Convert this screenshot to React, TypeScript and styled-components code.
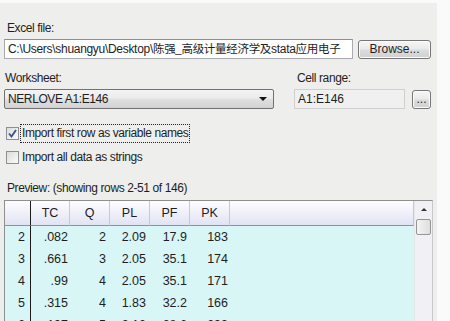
import React from 'react';
import styled, {createGlobalStyle} from 'styled-components';

const GlobalStyle = createGlobalStyle`
    html, body {
        margin: 0;
        padding: 0;
        background: #f9f9f9;
    }
    body {
        font-family: "Liberation Sans", "Noto Sans CJK SC", sans-serif;
        font-size: 12px;
        letter-spacing: -0.4px;
        color: #1e1e1e;
    }
`;

const Window = styled.div`
    width: 450px;
    height: 321px;
    overflow: hidden;
    display: flex;
    background: #fafafa;
`;

const Panel = styled.div`
    width: 437px;
    margin-top: 3px;
    padding: 18px 0 0 4px;
    box-sizing: border-box;
    background: #eeeeec;
    display: flex;
    flex-direction: column;
`;

const Label = styled.div`
    height: 15px;
    line-height: 15px;
    padding-left: ${(props) => props.indent || 3}px;
    margin-top: ${(props) => props.top || 0}px;
`;

const Row = styled.div`
    display: flex;
    align-items: center;
    margin-top: ${(props) => props.top || 0}px;
`;

const Column = styled.div`
    display: flex;
    flex-direction: column;
    width: ${(props) => props.width}px;
    margin-right: ${(props) => props.gap || 0}px;
`;

const TextBox = styled.div`
    width: ${(props) => props.width}px;
    height: 20px;
    box-sizing: border-box;
    border: 1px solid #a9abb2;
    border-top-color: #8e9096;
    background: ${(props) => props.disabled ? '#f0f0f0' : '#ffffff'};
    border-color: ${(props) => props.disabled ? '#cfcfcf' : ''};
    padding: 0 3px;
    line-height: 18px;
    white-space: nowrap;
    overflow: hidden;
    letter-spacing: ${(props) => props.tight ? '-0.3px' : '0'};
`;

const Cjk = styled.span`
    font-size: 11.5px;
`;

const Button = styled.div`
    width: ${(props) => props.width}px;
    height: 19px;
    margin-left: ${(props) => props.left || 0}px;
    box-sizing: border-box;
    border: 1px solid #767676;
    border-radius: 3px;
    background: linear-gradient(#f6f6f6 0%, #eaeaea 45%, #dcdcdc 55%, #d0d0d0 100%);
    box-shadow: inset 0 0 0 1px #fbfbfb;
    display: flex;
    align-items: center;
    justify-content: center;
    font-size: 12px;
    letter-spacing: 0;
`;

const Select = styled.div`
    width: 270px;
    height: 20px;
    box-sizing: border-box;
    border: 1px solid #727272;
    border-radius: 2px;
    background: linear-gradient(#f4f4f4 0%, #ebebeb 45%, #dedede 55%, #d2d2d2 100%);
    display: flex;
    align-items: center;
    justify-content: space-between;
    padding: 0 6px 0 3px;
`;

const Arrow = styled.span`
    width: 0;
    height: 0;
    border-left: 4px solid transparent;
    border-right: 4px solid transparent;
    border-top: 4px solid #111;
`;

const CheckRow = styled.div`
    display: flex;
    align-items: center;
    height: 19px;
    padding-left: 2px;
    margin-top: ${(props) => props.top || 0}px;
`;

const Box = styled.span`
    width: 13px;
    height: 13px;
    box-sizing: border-box;
    border: 1px solid #8e8f8f;
    background: linear-gradient(135deg, #dcdcdc, #fbfbfb);
    display: flex;
    align-items: center;
    justify-content: center;
`;

const CheckLabel = styled.span`
    margin-left: 2px;
    padding: 1px 1px;
    line-height: 15px;
    outline: ${(props) => props.focused ? '1px dotted #222' : 'none'};
`;

const Table = styled.div`
    margin-top: 4px;
    width: 429px;
    height: 130px;
    flex-shrink: 0;
    box-sizing: border-box;
    border: 1px solid #8f8f8f;
    border-right-color: #c8c8c8;
    display: flex;
    overflow: hidden;
    letter-spacing: 0;
`;

const Grid = styled.div`
    flex: 1;
    display: grid;
    grid-template-columns: 26px 39px 40px 40px 40px 40px 1fr;
    grid-auto-rows: 22px;
    grid-template-rows: 25px;
    background: #d9f6f6;
`;

const Head = styled.div`
    background: linear-gradient(#fdfdff, #e1e3f3);
    border-bottom: 1px solid #8494ac;
    border-right: 1px solid ${(props) => props.dark ? '#1c1c1c' : '#c6c9d6'};
    display: flex;
    align-items: center;
    justify-content: center;
    font-size: 12.5px;
`;

const Cell = styled.div`
    display: flex;
    align-items: center;
    justify-content: flex-end;
    padding-right: ${(props) => props.pad || 3}px;
    border-right: ${(props) => props.dark ? '1px solid #1c1c1c' : 'none'};
    font-size: 12.5px;
`;

const Scroll = styled.div`
    width: 17px;
    background: #f1f1f5;
    border-left: 1px solid #e6e6ea;
    display: flex;
    flex-direction: column;
    align-items: center;
`;

const UpArrow = styled.span`
    margin-top: 7px;
    width: 0;
    height: 0;
    border-left: 3px solid transparent;
    border-right: 3px solid transparent;
    border-bottom: 3px solid #333;
`;

const Thumb = styled.span`
    margin-top: 8px;
    width: 15px;
    height: 16px;
    box-sizing: border-box;
    border: 1px solid #959595;
    border-radius: 2px;
    background: linear-gradient(90deg, #f4f4f4, #dedede);
`;

const rows = [
    ['2', '.082', '2', '2.09', '17.9', '183'],
    ['3', '.661', '3', '2.05', '35.1', '174'],
    ['4', '.99', '4', '2.05', '35.1', '171'],
    ['5', '.315', '4', '1.83', '32.2', '166'],
    ['6', '.197', '5', '2.12', '28.6', '233'],
];

const headers = ['TC', 'Q', 'PL', 'PF', 'PK'];

const App = () => {
    return (
        <Window>
            <GlobalStyle />
            <Panel>
                <Label>Excel file:</Label>
                <Row top={3}>
                    <TextBox width={349} tight>
                        C:\Users\shuangyu\Desktop\<Cjk>陈强_高级计量经济学及</Cjk>stata<Cjk>应用电子</Cjk>
                    </TextBox>
                    <Button width={73} left={5}>Browse...</Button>
                </Row>
                <Row top={12}>
                    <Column width={270} gap={20}>
                        <Label indent={1}>Worksheet:</Label>
                        <Row top={3}>
                            <Select>
                                <span>NERLOVE A1:E146</span>
                                <Arrow />
                            </Select>
                        </Row>
                    </Column>
                    <Column width={140}>
                        <Label indent={0}>Cell range:</Label>
                        <Row top={3}>
                            <TextBox width={111} disabled>A1:E146</TextBox>
                            <Button width={19} left={7}>...</Button>
                        </Row>
                    </Column>
                </Row>
                <CheckRow top={16}>
                    <Box>
                        <svg width="9" height="9" viewBox="0 0 9 9">
                            <path d="M1 4.5 L3.5 7.5 L8 1" fill="none" stroke="#3b4f8a" strokeWidth="1.8" />
                        </svg>
                    </Box>
                    <CheckLabel focused>Import first row as variable names</CheckLabel>
                </CheckRow>
                <CheckRow top={7}>
                    <Box />
                    <CheckLabel>Import all data as strings</CheckLabel>
                </CheckRow>
                <Label indent={0} top={15}>Preview: (showing rows 2-51 of 146)</Label>
                <Table>
                    <Grid>
                        <Head dark />
                        {headers.map((h) => <Head key={h}>{h}</Head>)}
                        <Head />
                        {rows.map((r) => (
                            <React.Fragment key={r[0]}>
                                <Cell dark pad={5}>{r[0]}</Cell>
                                <Cell pad={2}>{r[1]}</Cell>
                                <Cell pad={4}>{r[2]}</Cell>
                                <Cell pad={4}>{r[3]}</Cell>
                                <Cell pad={3}>{r[4]}</Cell>
                                <Cell pad={2}>{r[5]}</Cell>
                                <Cell />
                            </React.Fragment>
                        ))}
                    </Grid>
                    <Scroll>
                        <UpArrow />
                        <Thumb />
                    </Scroll>
                </Table>
            </Panel>
        </Window>
    );
};

export default App;
